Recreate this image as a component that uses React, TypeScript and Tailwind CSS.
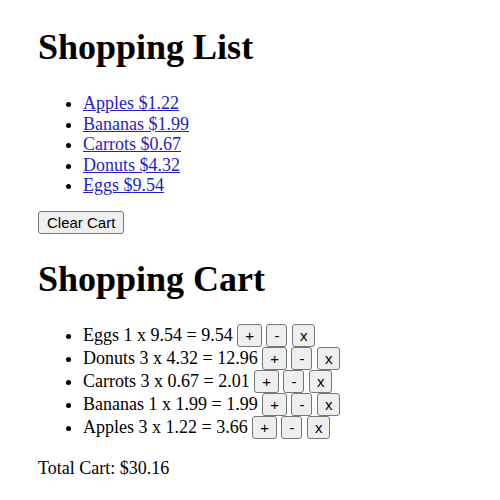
const products = [
  { name: "Apples", price: 1.22 },
  { name: "Bananas", price: 1.99 },
  { name: "Carrots", price: 0.67 },
  { name: "Donuts", price: 4.32 },
  { name: "Eggs", price: 9.54 },
];

const cart = [
  { name: "Eggs", qty: 1, price: 9.54 },
  { name: "Donuts", qty: 3, price: 4.32 },
  { name: "Carrots", qty: 3, price: 0.67 },
  { name: "Bananas", qty: 1, price: 1.99 },
  { name: "Apples", qty: 3, price: 1.22 },
];

const btn =
  "inline-block rounded-[3px] border border-[#767676] bg-[#efefef] px-[7px] py-[2px] align-baseline font-['Liberation_Sans',Arial,sans-serif] text-[15px] leading-[normal] text-black";

export default function App() {
  const total = cart.reduce((sum, item) => sum + item.qty * item.price, 0);

  return (
    <div className="min-h-[500px] bg-white pl-[38px] pt-[26px] font-['Liberation_Serif','Times_New_Roman',serif] text-[18px] leading-[normal] text-black">
      <h1 className="mb-[25px] text-[36px] font-bold leading-[normal]">Shopping List</h1>
      <ul className="list-disc pl-[45px]">
        {products.map((p) => (
          <li key={p.name} className="leading-[20.5px]">
            <a href="#" className="text-[#1f1fc4] underline">
              {p.name} ${p.price.toFixed(2)}
            </a>
          </li>
        ))}
      </ul>

      <div className="mt-[15px] leading-none">
        <button className={`${btn} px-[8px]`}>Clear Cart</button>
      </div>

      <h1 className="mt-[24px] mb-[24px] text-[36px] font-bold leading-[normal]">Shopping Cart</h1>
      <ul className="list-disc pl-[45px]">
        {cart.map((item) => (
          <li key={item.name}>
            {item.name} {item.qty} x {item.price.toFixed(2)} = {(item.qty * item.price).toFixed(2)}{" "}
            <button className={btn}>+</button> <button className={btn}>-</button>{" "}
            <button className={btn}>x</button>
          </li>
        ))}
      </ul>

      <p className="mt-[19px]">Total Cart: ${total.toFixed(2)}</p>
    </div>
  );
}
